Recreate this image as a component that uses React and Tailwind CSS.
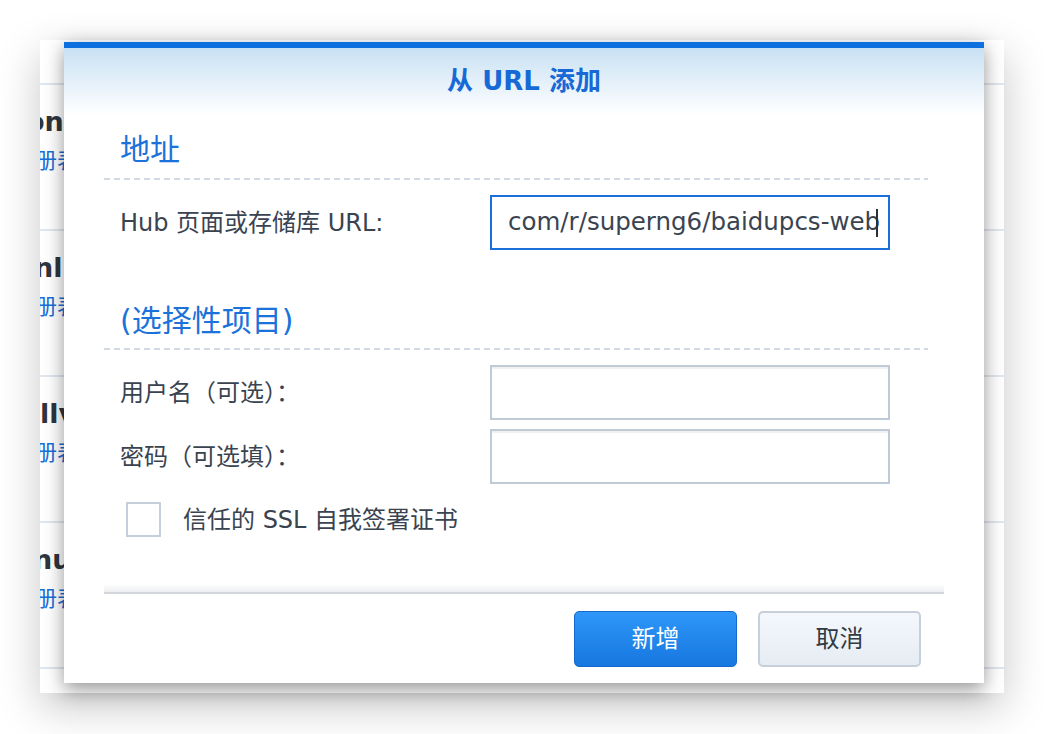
import React from 'react';

const font = "font-['DejaVu_Sans','Noto_Sans_CJK_SC',sans-serif]";

const rows = [
  { title: 'on', shift: '-ml-[14px]' },
  { title: 'nl', shift: '-ml-[6px]' },
  { title: 'llv', shift: '-ml-[0px]' },
  { title: 'nu', shift: '-ml-[7px]' },
];

function Dashed() {
  return (
    <div className="h-[2px] w-[824px] bg-[linear-gradient(to_right,#d1d9e3_6px,transparent_6px)] bg-[length:10px_2px]" />
  );
}

function SectionTitle({ children, className }) {
  return (
    <div className={`pl-[16px] text-[30px] leading-[40px] text-[#1a72da] ${className}`}>
      {children}
    </div>
  );
}

function FieldRow({ label, className, children }) {
  return (
    <div className={`flex h-[55px] items-center ${className}`}>
      <div className="w-[386px] pl-[16px] text-[24px] text-[#3a4350]">{label}</div>
      {children}
    </div>
  );
}

export default function App() {
  return (
    <div className={`relative h-[734px] w-[1044px] overflow-hidden bg-white p-[40px] ${font}`}>
      {/* window behind the dialog */}
      <div className="h-[653px] w-[964px] overflow-hidden bg-white pt-[43px] shadow-[0_14px_40px_rgba(0,0,0,0.22)]">
        <div className="border-t-2 border-[#e1e7ef]">
          {rows.map((r) => (
            <div key={r.title} className="h-[146px] border-b-2 border-[#e1e7ef] pt-[22px]">
              <div className={`${r.shift} whitespace-nowrap text-[27px] font-bold leading-[30px] text-[#2f353d]`}>
                {r.title}
              </div>
              <div className="-ml-[27px] mt-[12px] whitespace-nowrap text-[22px] leading-[24px] text-[#1a6fd8]">
                注册表
              </div>
            </div>
          ))}
        </div>
      </div>

      {/* dialog */}
      <div className="absolute left-[64px] top-[42px] flex h-[641px] w-[920px] flex-col bg-white shadow-[0_6px_18px_rgba(0,0,0,0.42)]">
        <div className="h-[6px] bg-[#0e6fde]" />
        <div className="flex h-[67px] items-center justify-center bg-gradient-to-b from-[#c9e1f4] to-white">
          <span className="text-[26px] font-bold text-[#1669d6]">从 URL 添加</span>
        </div>

        <div className="flex flex-col px-[40px]">
          <div className="flex h-[63px] items-center pt-[7px]">
            <SectionTitle>地址</SectionTitle>
          </div>
          <Dashed />

          <FieldRow label="Hub 页面或存储库 URL:" className="mt-[15px]">
            <div className="flex h-[55px] w-[400px] items-center overflow-hidden whitespace-nowrap border-2 border-[#1a70d8] pl-[16px] text-[24.5px] text-[#3a4450]">
              <span>com/r/superng6/baidupcs-web</span>
              <span className="-ml-[4px] inline-block h-[28px] w-[2px] bg-[#2b2f36]" />
            </div>
          </FieldRow>

          <div className="flex h-[98px] items-end pb-[7px]">
            <SectionTitle>(选择性项目)</SectionTitle>
          </div>
          <Dashed />

          <FieldRow label="用户名（可选）：" className="mt-[15px]">
            <div className="h-[55px] w-[400px] border-2 border-[#c0cbd8] shadow-[inset_0_2px_1px_rgba(0,0,0,0.06)]" />
          </FieldRow>
          <FieldRow label="密码（可选填）：" className="mt-[9px]">
            <div className="h-[55px] w-[400px] border-2 border-[#c0cbd8] shadow-[inset_0_2px_1px_rgba(0,0,0,0.06)]" />
          </FieldRow>

          <div className="mt-[18px] flex h-[35px] items-center pl-[22px]">
            <div className="h-[35px] w-[35px] border-2 border-[#c5cfdb] bg-white" />
            <span className="ml-[22px] text-[24px] text-[#3a4350]">信任的 SSL 自我签署证书</span>
          </div>

          <div className="mt-[47px] h-[8px] bg-gradient-to-b from-transparent to-[#eceef1]" />
          <div className="h-[2px] bg-[#d3d6da]" />

          <div className="mr-[23px] mt-[17px] flex justify-end gap-[21px]">
            <button className="h-[56px] w-[163px] rounded-[5px] border border-[#1669cc] bg-gradient-to-b from-[#2e97f8] to-[#1777e0] text-[24px] text-white">
              新增
            </button>
            <button className="h-[56px] w-[163px] rounded-[5px] border-2 border-[#c6cfda] bg-gradient-to-b from-[#f4f8fd] to-[#e6ecf3] text-[24px] text-[#333a44]">
              取消
            </button>
          </div>
        </div>
      </div>
    </div>
  );
}
